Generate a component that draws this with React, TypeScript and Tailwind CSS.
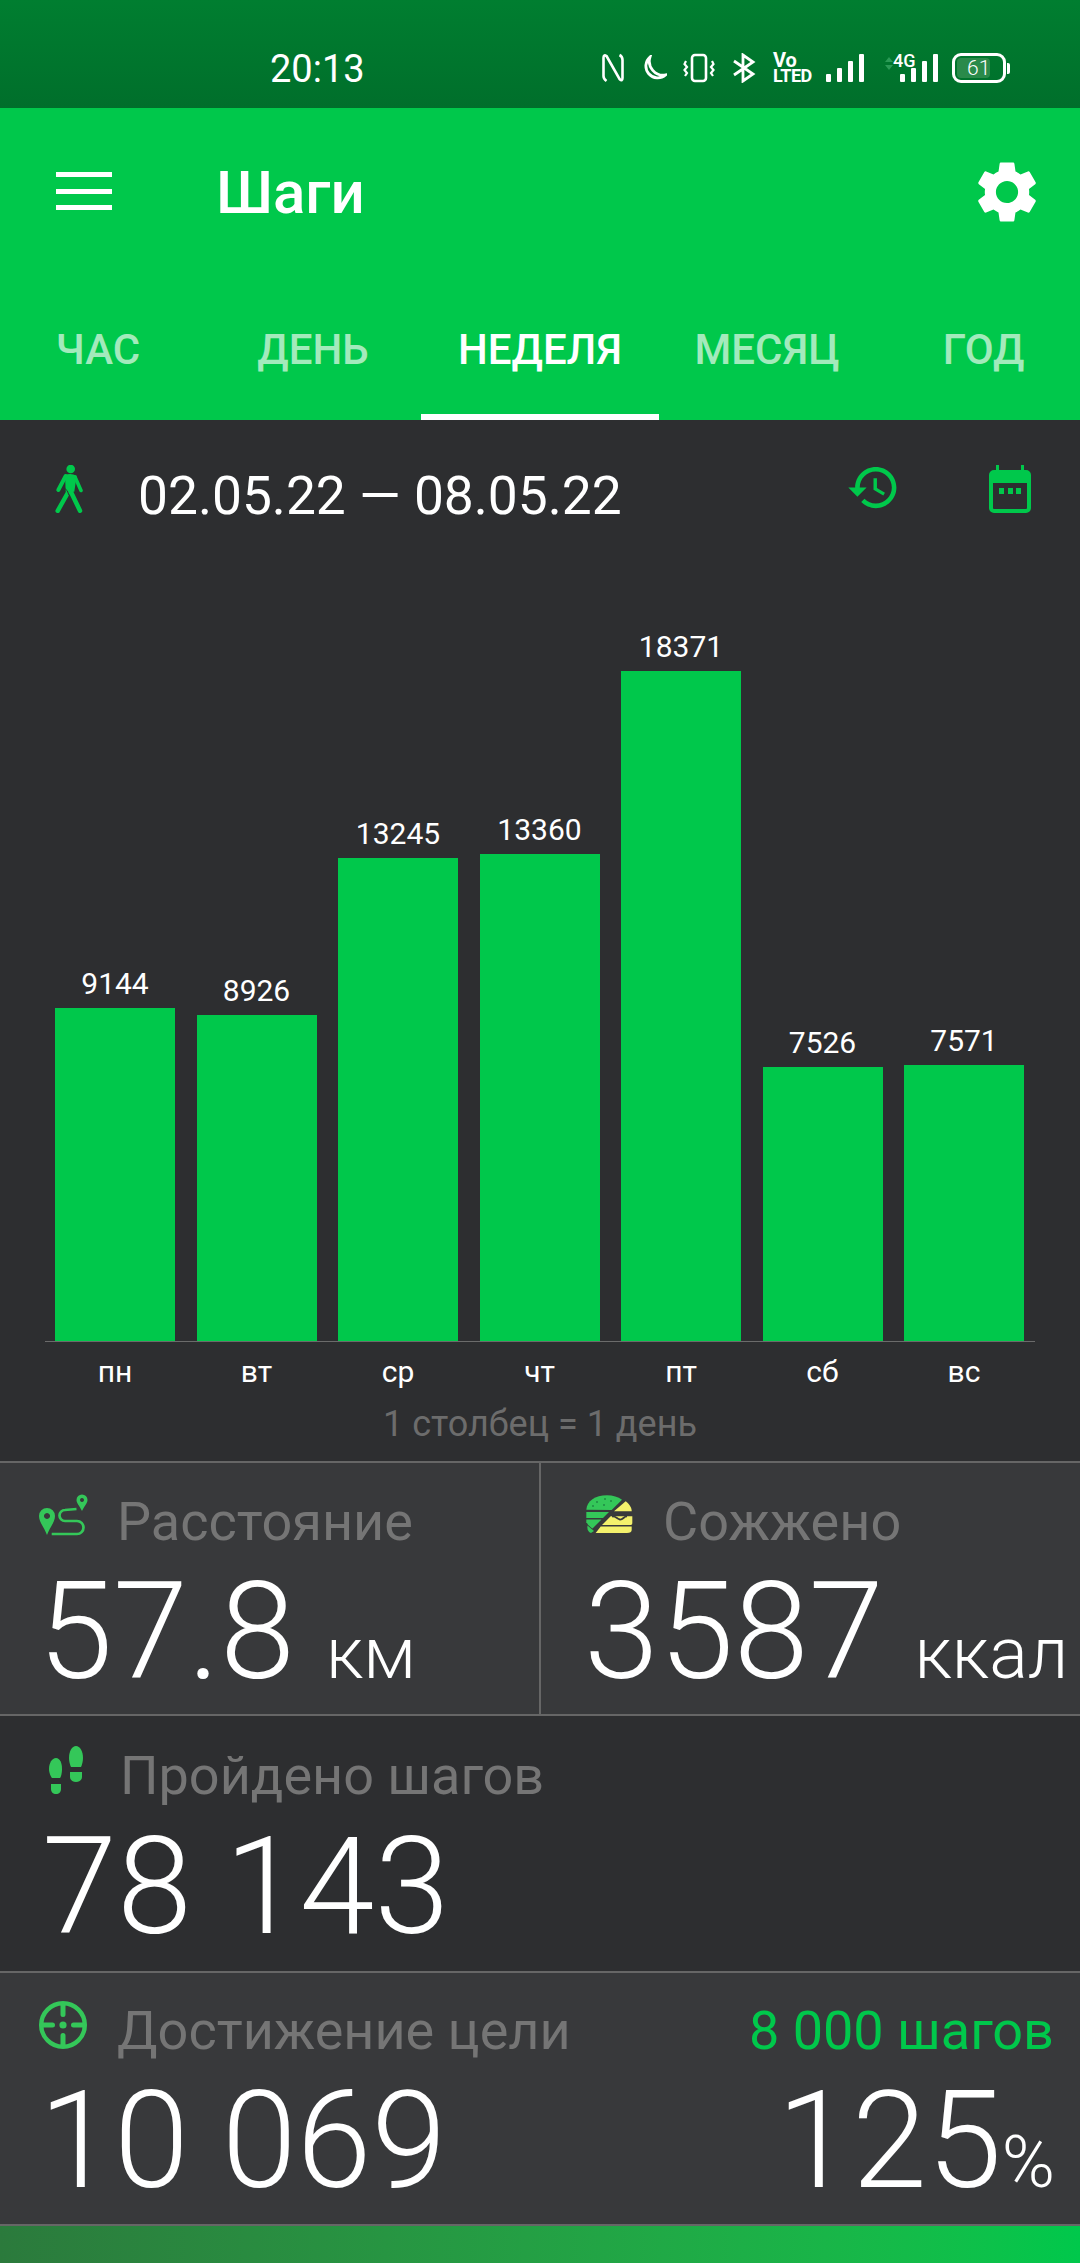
import React from "react";

const GREEN = "#00c84b";
const days = [
  { d: "пн", v: 9144 },
  { d: "вт", v: 8926 },
  { d: "ср", v: 13245 },
  { d: "чт", v: 13360 },
  { d: "пт", v: 18371 },
  { d: "сб", v: 7526 },
  { d: "вс", v: 7571 },
];

function StatusIcons() {
  return (
    <div className="flex items-center h-[30px] text-white">
      <svg width="22" height="30" viewBox="0 0 22 30" fill="none" stroke="white" strokeWidth="2.6" className="ml-[602px]">
        <path d="M4.5 28 Q1.5 26 1.5 23 V5 Q1.5 1 4.5 3 L17.5 26 Q20.5 29 20.5 25 V7 Q20.5 3.5 17.5 2" />
      </svg>
      <svg width="26" height="26" viewBox="0 0 26 26" fill="none" stroke="white" strokeWidth="2.8" className="ml-[17px]">
        <path d="M9 2 A11.5 11.5 0 1 0 24.5 20 A14 14 0 0 1 9 2 Z" />
      </svg>
      <svg width="32" height="30" viewBox="0 0 32 30" fill="none" stroke="white" strokeWidth="2.2" className="ml-[16px]">
        <rect x="9" y="2" width="14" height="26" rx="3" strokeWidth="2.6" />
        <path d="M3 8 L1.5 11 L4 14 L1.5 17 L4 20 L2 23" />
        <path d="M29 8 L30.5 11 L28 14 L30.5 17 L28 20 L30 23" />
      </svg>
      <svg width="24" height="30" viewBox="0 0 24 30" fill="none" stroke="white" strokeWidth="2.8" className="ml-[17px]">
        <path d="M2 8 L21 21 L11 28 V2 L21 9 L2 22" />
      </svg>
      <div className="ml-[17px] w-[36px] h-[30px] flex flex-col font-bold text-white">
        <span className="text-[20px] h-[15px] leading-[15px]">Vo</span>
        <span className="text-[18px] h-[15px] leading-[16px] tracking-[-0.5px] whitespace-nowrap">LTED</span>
      </div>
      <svg width="40" height="30" viewBox="0 0 40 30" fill="white" className="ml-[17px]">
        <rect x="0" y="21" width="5" height="8" rx="1" />
        <rect x="11" y="15" width="5" height="14" rx="1" />
        <rect x="22" y="8" width="5" height="21" rx="1" />
        <rect x="33" y="1" width="5" height="28" rx="1" />
      </svg>
      <div className="ml-[15px] w-[62px] h-[30px] relative">
        <svg width="62" height="30" viewBox="0 0 62 30" fill="white">
          <path d="M4 9 L8 4 L12 9 Z M4 12 L8 17 L12 12 Z" fill="#2a9a55" />
          <rect x="19" y="21" width="5" height="8" rx="1" />
          <rect x="30" y="15" width="5" height="14" rx="1" />
          <rect x="41" y="8" width="5" height="21" rx="1" />
          <rect x="52" y="1" width="5" height="28" rx="1" />
        </svg>
        <span className="absolute left-[12px] top-[1px] text-[18px] leading-[14px] font-medium text-white">4G</span>
      </div>
      <div className="ml-[9px] w-[54px] h-[30px] rounded-[9px] border-[3px] border-white relative flex items-center">
        <div className="absolute left-[2px] top-[2px] bottom-[2px] w-[33px] rounded-[4px] bg-[#2a8a4a]" />
        <span className="relative ml-[12px] text-[21px] leading-none font-light text-white">61</span>
      </div>
      <div className="ml-[1px] w-[3px] h-[11px] rounded-r-[2px] bg-white" />
    </div>
  );
}

function WalkIcon() {
  return (
    <svg width="28" height="48" viewBox="0 0 28 48" fill="none" stroke={GREEN} strokeLinecap="round" className="ml-[55px] mt-[45px] shrink-0">
      <circle cx="15.7" cy="4" r="4.3" fill={GREEN} stroke="none" />
      <path d="M10 10 Q15.7 7.500 21.7 10.700 L19.300 26.700 L10.700 26.700 Z" fill={GREEN} stroke="none" />
      <path d="M10.700 11 L3.300 25" strokeWidth="4" />
      <path d="M20 12 L26 25.500" strokeWidth="3.600" />
      <path d="M13.300 27 L2.700 45.800" strokeWidth="4.500" />
      <path d="M15.500 26 L25 45.800" strokeWidth="4.500" />
      <path d="M9.500 23 Q13 25 14 30" stroke="#2d2e30" strokeWidth="1" />
    </svg>
  );
}

function RouteIcon() {
  return (
    <svg width="50" height="46" viewBox="0 0 50 46" className="shrink-0">
      <path fillRule="evenodd" fill="#34c759" d="M8 14 a8 8 0 0 1 8 8 c0 6 -5 11 -8 19 c-3 -8 -8 -13 -8 -19 a8 8 0 0 1 8 -8 z m0 5 a3 3 0 1 0 0.010 0 z" />
      <path fillRule="evenodd" fill="#34c759" d="M43 0.500 a5.500 5.500 0 0 1 5.500 5.500 c0 3 -3 6 -5.500 11 c-2.500 -5 -5.500 -8 -5.500 -11 a5.500 5.500 0 0 1 5.500 -5.500 z m0 3.500 a2 2 0 1 0 0.010 0 z" />
      <path fill="none" stroke="#34c759" strokeWidth="2.700" d="M12.700 40 H38 a6.500 6.500 0 0 0 0 -13 H26 a5.500 5.500 0 0 1 0 -11 L37.500 15" />
    </svg>
  );
}

function BurgerIcon() {
  return (
    <svg width="48" height="40" viewBox="0 0 48 40" className="shrink-0">
      <path fill="#34c759" d="M1.300 14.700 C2 6 10 0.300 22 0.300 C28 0.300 33 2 37 4.700 L26.700 15 Z" />
      <path fill="#34c759" d="M1.300 17 H24 L18 23 H1.300 Z" />
      <path fill="#34c759" d="M1.300 25 H16 L3 28 H1.300 Z M1.300 24.500 H16.500 L7.500 33.500 C4 31 1.300 29 1.300 24.500 Z" />
      <path fill="#34c759" d="M2.500 30.500 L9 36 L6 38 C3 37 2 34 2.500 30.500 Z" />
      <path fill="#f4f16c" d="M40.700 6.300 C44 9 46.700 12 46.700 16.300 H29 Z" />
      <path fill="#f4f16c" d="M25.700 21.300 H47.300 V28 C47.300 30 46 30 45 30 H17 Z" />
      <path fill="#f4f16c" d="M15.700 31.500 H46.700 V35 C46.700 37 45 38 42 38 H10.700 Z" />
      <path fill="none" stroke="#38393b" strokeWidth="1.800" d="M27 21.500 C31 21 32 24 35 24.500 C38 25 39 21 42 21.500" />
      <g fill="#1f8a45">
        <circle cx="12" cy="7" r="1" /><circle cx="20" cy="4" r="1" /><circle cx="26" cy="6" r="1" /><circle cx="19" cy="10" r="1" /><circle cx="8" cy="11" r="1" />
      </g>
    </svg>
  );
}

function FeetIcon() {
  return (
    <svg width="34" height="48" viewBox="0 0 34 48" fill="#34c759" className="shrink-0">
      <path d="M7 12 C11 12 13 17 13 23 C13 27 12 31 11 32 H3 C2 31 0 27 0 23 C0 17 3 12 7 12 Z" />
      <path d="M2 38 H12 V43 C12 46 10 48 7 48 C4 48 2 46 2 43 Z" />
      <path d="M27 0 C31 0 34 5 34 12 C34 15 33 19 32 21 H22 C21 19 20 15 20 12 C20 5 23 0 27 0 Z" />
      <path d="M21 26 H33 V31 C33 34 30 36 27 36 C24 36 21 34 21 31 Z" />
    </svg>
  );
}

function TargetIcon() {
  return (
    <svg width="48" height="48" viewBox="0 0 48 48" fill="none" stroke="#34c759" className="shrink-0">
      <circle cx="24" cy="24" r="21.800" strokeWidth="4.400" />
      <path d="M24 4 V13.500 M24 34.500 V44 M4 24 H13.500 M34.500 24 H44" strokeWidth="5" strokeLinecap="round" />
      <circle cx="24" cy="24" r="3.600" fill="#34c759" stroke="none" />
    </svg>
  );
}

export default function App() {
  return (
    <div className="w-[1080px] h-[2263px] flex flex-col overflow-hidden bg-[#2d2e30] font-[Roboto,sans-serif]">
      {/* status bar */}
      <div className="h-[108px] shrink-0 bg-gradient-to-b from-[#007e30] to-[#006f2b] relative flex items-center pt-[28px]">
        <span className="absolute left-[270px] top-[47px] text-[38px] leading-[44px] text-white">20:13</span>
        <StatusIcons />
      </div>

      {/* app bar */}
      <div className="h-[312px] shrink-0 bg-[#00c84b] flex flex-col">
        <div className="h-[200px] flex items-start">
          <div className="ml-[56px] mt-[64px] w-[56px] h-[38px] flex flex-col justify-between">
            <div className="h-[5px] bg-white" />
            <div className="h-[5px] bg-white" />
            <div className="h-[5px] bg-white" />
          </div>
          <span className="ml-[104px] mt-[48px] text-[60px] leading-[74px] font-medium text-white">Шаги</span>
          <svg width="74" height="74" viewBox="0 0 24 24" fill="white" className="ml-auto mr-[36px] mt-[47px]">
            <path d="M19.14 12.94c.04-.3.06-.61.06-.94 0-.32-.02-.64-.07-.94l2.03-1.58c.18-.14.23-.41.12-.61l-1.92-3.32c-.12-.22-.37-.29-.59-.22l-2.39.96c-.5-.38-1.03-.7-1.62-.94l-.36-2.54c-.04-.24-.24-.41-.48-.41h-3.84c-.24 0-.43.17-.47.41l-.36 2.54c-.59.24-1.13.57-1.62.94l-2.39-.96c-.22-.08-.47 0-.59.22L2.74 8.87c-.12.21-.08.47.12.61l2.03 1.58c-.05.3-.09.63-.09.94s.02.64.07.94l-2.03 1.58c-.18.14-.23.41-.12.61l1.92 3.32c.12.22.37.29.59.22l2.39-.96c.5.38 1.03.7 1.62.94l.36 2.54c.05.24.24.41.48.41h3.84c.24 0 .44-.17.47-.41l.36-2.54c.59-.24 1.13-.56 1.62-.94l2.39.96c.22.08.47 0 .59-.22l1.92-3.32c.12-.22.07-.47-.12-.61l-2.01-1.58zM12 15.6c-1.98 0-3.6-1.62-3.6-3.6s1.62-3.6 3.6-3.6 3.6 1.62 3.6 3.6-1.62 3.6-3.6 3.6z" />
          </svg>
        </div>
        <div className="h-[112px] flex text-[42px] font-medium leading-[52px]">
          <div className="w-[196px] pt-[16px] text-center text-[#a3eabc]">ЧАС</div>
          <div className="w-[225px] pl-[9px] pt-[16px] text-center text-[#a3eabc]">ДЕНЬ</div>
          <div className="w-[238px] pt-[16px] text-center text-white border-b-[6px] border-white">НЕДЕЛЯ</div>
          <div className="w-[216px] pt-[16px] text-center text-[#a3eabc]">МЕСЯЦ</div>
          <div className="w-[205px] pl-[12px] pt-[16px] text-center text-[#a3eabc]">ГОД</div>
        </div>
      </div>

      {/* date row */}
      <div className="h-[112px] shrink-0 flex items-start">
        <WalkIcon />
        <span className="ml-[55px] mt-[43px] text-[53.3px] leading-[66px] text-white whitespace-nowrap">02.05.22 — 08.05.22</span>
        <svg width="55" height="55" viewBox="0 0 24 24" fill={GREEN} className="ml-auto mt-[40px] shrink-0">
          <path d="M13 3c-4.97 0-9 4.03-9 9H1l3.89 3.89.07.14L9 12H6c0-3.87 3.13-7 7-7s7 3.13 7 7-3.13 7-7 7c-1.93 0-3.68-.79-4.94-2.06l-1.42 1.42C8.27 19.99 10.51 21 13 21c4.97 0 9-4.03 9-9s-4.03-9-9-9zm-1 5v5l4.28 2.54.72-1.21-3.5-2.08V8H12z" />
        </svg>
        <svg width="42" height="48" viewBox="0 0 42 48" fill={GREEN} className="ml-[88px] mr-[49px] mt-[45px] shrink-0">
          <path fillRule="evenodd" d="M7 0 H10 V5 H32 V0 H35 V5 H37 A5 5 0 0 1 42 10 V43 A5 5 0 0 1 37 48 H5 A5 5 0 0 1 0 43 V10 A5 5 0 0 1 5 5 H7 Z M4 18 V43 A1 1 0 0 0 5 44 H37 A1 1 0 0 0 38 43 V18 Z" />
          <rect x="10" y="23" width="5" height="6" /><rect x="19" y="23" width="5" height="6" /><rect x="27" y="23" width="5" height="6" />
        </svg>
      </div>

      {/* chart */}
      <div className="h-[810px] shrink-0 mx-[45px] w-[990px] border-b-[1px] border-[#6b6b6b] flex items-end gap-[21.5px] pl-[10px]">
        {days.map((x) => (
          <div key={x.d} className="w-[120px] flex flex-col items-center">
            <span className="text-[30px] leading-[34px] mb-[7px] text-white">{x.v}</span>
            <div className="w-[120px] bg-[#00c84b]" style={{ height: Math.round(x.v * 0.03647) }} />
          </div>
        ))}
      </div>
      <div className="mx-[45px] w-[990px] flex gap-[21.5px] pl-[10px] mt-[11px]">
        {days.map((x) => (
          <div key={x.d} className="w-[120px] text-center text-[30px] leading-[38px] text-white">{x.d}</div>
        ))}
      </div>
      <div className="mt-[11px] h-[44px] text-center text-[36px] leading-[44px] text-[#6c6c6c]">1 столбец = 1 день</div>
      <div className="h-[15px] shrink-0" />

      {/* row 1 */}
      <div className="h-[255px] shrink-0 flex bg-[#38393b] border-y-[2px] border-[#666666]">
        <div className="w-[541px] shrink-0 border-r-[2px] border-[#666666]">
          <div className="flex items-start pl-[39px] pt-[31px]">
            <RouteIcon />
            <span className="ml-[28px] mt-[-1px] text-[54px] leading-[58px] text-[#757575]">Расстояние</span>
          </div>
          <div className="flex items-baseline pl-[38px] mt-[6px] whitespace-nowrap">
            <span className="text-[135px] leading-[150px] font-light text-white">57.8</span>
            <span className="ml-[31px] text-[72px] font-light text-white">км</span>
          </div>
        </div>
        <div className="flex-1 min-w-0">
          <div className="flex items-start pl-[44px] pt-[32px]">
            <BurgerIcon />
            <span className="ml-[30px] mt-[-2px] text-[54px] leading-[58px] text-[#757575]">Сожжено</span>
          </div>
          <div className="flex items-baseline pl-[43px] mt-[6px] whitespace-nowrap">
            <span className="text-[135px] leading-[150px] font-light text-white">3587</span>
            <span className="ml-[31px] text-[72px] font-light text-white">ккал</span>
          </div>
        </div>
      </div>

      {/* row 2 */}
      <div className="h-[255px] shrink-0">
        <div className="flex items-start pl-[49px] pt-[30px]">
          <FeetIcon />
          <span className="ml-[37px] mt-[1px] text-[54px] leading-[58px] text-[#757575]">Пройдено шагов</span>
        </div>
        <div className="pl-[42px] mt-[7px] text-[135px] leading-[150px] font-light text-white">78 143</div>
      </div>

      {/* row 3 */}
      <div className="h-[255px] shrink-0 bg-[#38393b] border-y-[2px] border-[#666666]">
        <div className="flex items-start pl-[39px] pt-[28px] pr-[26px]">
          <TargetIcon />
          <span className="ml-[30px] mt-[1px] text-[54px] leading-[58px] text-[#757575]">Достижение цели</span>
          <span className="ml-auto mt-[1px] text-[54px] leading-[58px] text-[#00c84b]">8 000 шагов</span>
        </div>
        <div className="flex items-baseline pl-[39px] pr-[25px] mt-[6px]">
          <span className="text-[135px] leading-[150px] font-light text-white">10 069</span>
          <span className="ml-auto text-[135px] leading-[150px] font-light text-white">125</span>
          <span className="text-[72px] font-light text-white">%</span>
        </div>
      </div>

      {/* bottom strip */}
      <div className="flex-1 bg-gradient-to-r from-[#2b7a3c] to-[#00c84b]" />
    </div>
  );
}
